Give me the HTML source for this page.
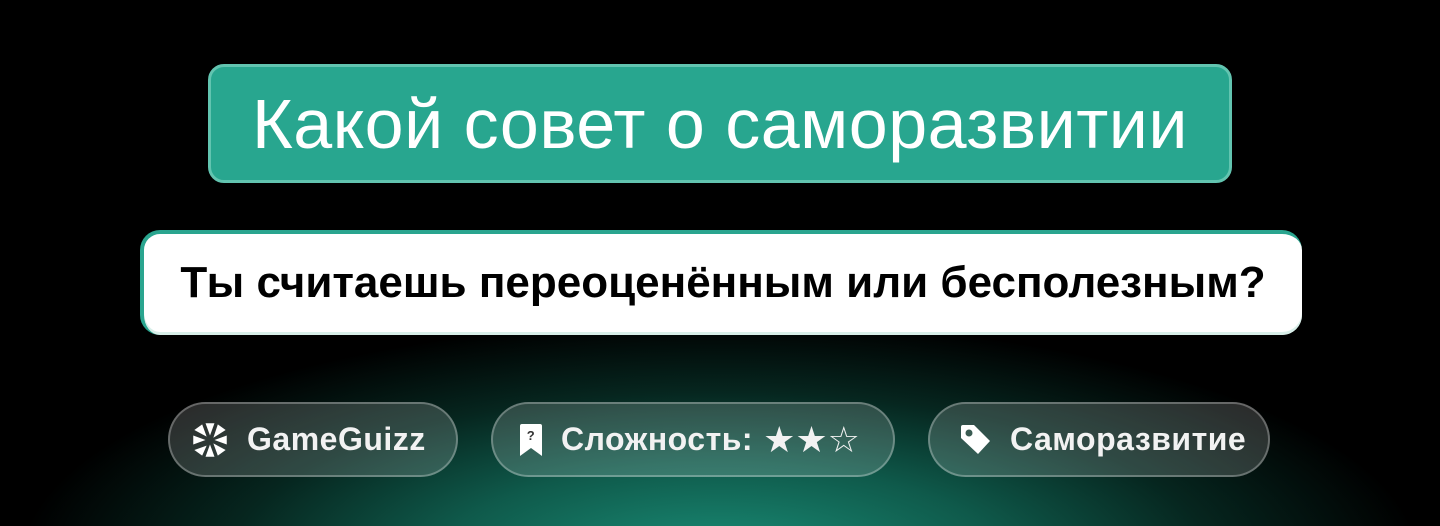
<!DOCTYPE html>
<html><head><meta charset="utf-8"><style>
*{margin:0;padding:0;box-sizing:border-box}
body{width:1440px;height:526px;overflow:hidden;background:#000;font-family:"Liberation Sans","DejaVu Sans",sans-serif;position:relative}
.bg{position:absolute;inset:0;background:radial-gradient(ellipse 700px 240px at 720px 560px,#1a8f78 0%,#0f5a4b 40%,#06261f 70%,#000 100%)}
.title{position:absolute;left:208px;top:64px;width:1024px;height:119px;border-radius:16px;background:#28a68f;border:3px solid #62c4b0;color:#fff;font-size:70px;text-align:center;line-height:115px;letter-spacing:0.5px}
.q{position:absolute;left:140px;top:230px;width:1162px;height:105px;border-radius:20px;background:#fff;border-top:4px solid #2aa58f;border-left:4px solid #2aa58f;color:#000;font-weight:bold;font-size:44px;text-align:center;line-height:98px;box-shadow:inset 0 -3px 0 #d8efe9}
.pill{position:absolute;top:402px;height:75px;border-radius:38px;background:rgba(255,255,255,0.17);border:2px solid rgba(255,255,255,0.28);color:#f2f2f2;font-weight:bold;font-size:32px;letter-spacing:0.5px;line-height:71px;display:flex;align-items:center;padding-left:21px}
.pill svg{margin-right:18px;flex:none}
.st{font-size:36px;letter-spacing:0}
</style></head><body>
<div class="bg"></div>
<div class="title">Какой совет о саморазвитии</div>
<div class="q">Ты считаешь переоценённым или бесполезным?</div>
<div class="pill" style="left:168px;width:290px">
<svg width="38" height="38" viewBox="0 0 34 34" fill="#fff"><path d="M13 2h8l-4 11z"/><path d="M24 3l7 5-11 7z"/><path d="M32 13v8l-11-4z"/><path d="M31 26l-7 5-4-11z"/><path d="M21 32h-8l4-11z"/><path d="M10 31l-7-5 11-4z"/><path d="M2 21v-8l11 4z"/><path d="M3 8l7-5 4 11z"/></svg>GameGuizz</div>
<div class="pill" style="left:491px;width:404px;padding-left:26px">
<svg width="24" height="34" viewBox="0 0 24 34"><path d="M3 1h18a2 2 0 0 1 2 2v30l-11-8-11 8V3a2 2 0 0 1 2-2z" fill="#fff"/><text x="12" y="17" font-size="13" font-weight="bold" text-anchor="middle" fill="#333" font-family="Liberation Sans">?</text></svg>Сложность: <span class="st">&nbsp;★★☆</span></div>
<div class="pill" style="left:928px;width:342px;padding-left:28px">
<svg width="34" height="34" viewBox="0 0 34 34"><path d="M3 4a2 2 0 0 1 2-2h11l16 16-12 13L3 15z" fill="#fff"/><circle cx="11" cy="10" r="3.5" fill="#3a5b52"/></svg>Саморазвитие</div>
</body></html>
